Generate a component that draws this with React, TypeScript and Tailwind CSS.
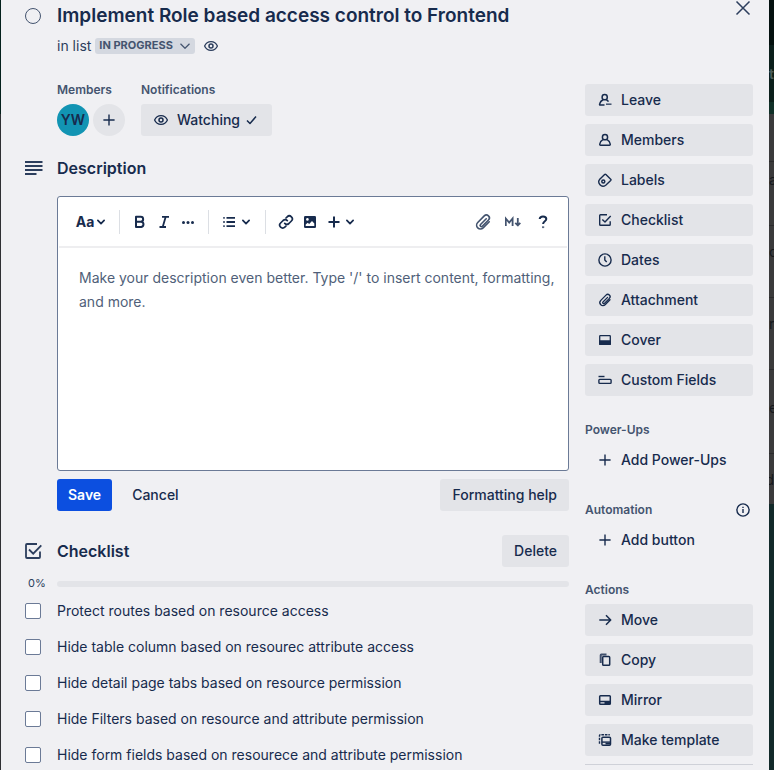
import type { ReactNode } from "react";

function Svg({ size = 16, className = "", children }: { size?: number; className?: string; children: ReactNode }) {
  return (
    <svg
      width={size}
      height={size}
      viewBox="0 0 16 16"
      fill="none"
      stroke="currentColor"
      strokeWidth="1.3"
      strokeLinecap="butt"
      strokeLinejoin="round"
      aria-hidden="true"
      className={"shrink-0 " + className}
    >
      {children}
    </svg>
  );
}

const EyeIcon = () => (
  <Svg>
    <path d="M1.6 8C2.8 5.2 5.2 3.6 8 3.6S13.2 5.2 14.4 8C13.2 10.8 10.8 12.4 8 12.4S2.8 10.8 1.6 8Z" />
    <circle cx="8" cy="8" r="2" strokeWidth="1.5" />
  </Svg>
);
const PlusIcon = () => (
  <Svg>
    <path d="M8 2.4v11.2M2.4 8h11.2" strokeWidth="1.4" />
  </Svg>
);
const ChevronIcon = () => (
  <Svg size={10}>
    <path d="M3 5.5l5 5 5-5" strokeWidth="2.8" strokeLinecap="round" />
  </Svg>
);
const ClipIcon = ({ size = 16 }: { size?: number }) => (
  <Svg size={size}>
    <path
      d="M10.6 5.4 6 10a.9.9 0 0 0 1.4 1.4l5-5A2.3 2.3 0 0 0 9 3.1L3.8 8.4a3 3 0 0 0 4.3 4.3L13 7.8"
      strokeWidth="1.3"
      strokeLinecap="round"
    />
  </Svg>
);
const LeaveIcon = () => (
  <Svg>
    <circle cx="7.7" cy="5.2" r="2.6" strokeWidth="1.5" />
    <path d="M7.5 13H3.2c-.6 0-.8-.6-.5-1.2.5-1.9 1.6-3.3 3.3-4.1M9.4 7.7c.9.4 1.6 1.1 2.1 1.9" strokeWidth="1.5" />
    <path d="M9 12.2h5.5" strokeWidth="1.5" opacity=".8" />
  </Svg>
);
const MemberIcon = () => (
  <Svg>
    <circle cx="8" cy="5.2" r="2.6" strokeWidth="1.5" />
    <path
      d="M5.9 7.7C4.2 8.6 2.9 10.2 2.7 12.2c0 .6.3 1 .8 1h9c.5 0 .8-.4.8-1-.2-2-1.5-3.6-3.2-4.5"
      strokeWidth="1.5"
    />
  </Svg>
);
const LabelIcon = () => (
  <Svg>
    <path
      d="M2.5 7.6 7.6 2.5c.4-.4.9-.4 1.3 0l4.8 4.7c.4.4.4.9 0 1.3l-5 4.7c-1.8 1.4-4.3 1.2-5.7-.4s-1.6-3.7-.5-5.2Z"
      strokeWidth="1.4"
    />
    <circle cx="6.3" cy="9.5" r="1.5" strokeWidth="1.5" />
  </Svg>
);
const CheckSquareIcon = () => (
  <Svg>
    <path d="M10 2.8H3.5a.8.8 0 0 0-.8.8v8.9c0 .4.4.8.8.8h8.9c.5 0 .8-.4.8-.8V9.2" strokeWidth="1.4" />
    <path d="m5.3 7.4 2.7 2.7 5.7-6" strokeWidth="1.4" />
  </Svg>
);
const ClockIcon = () => (
  <Svg>
    <circle cx="8" cy="8" r="6.1" strokeWidth="1.4" />
    <path d="M7.8 4.3V8l1.9 2" strokeWidth="1.4" />
  </Svg>
);
const CoverIcon = () => (
  <Svg>
    <rect x="2.7" y="3.7" width="10.6" height="8.6" rx=".6" />
    <path d="M2.7 9h10.6v3.3H2.7Z" fill="currentColor" />
  </Svg>
);
const FieldsIcon = () => (
  <Svg>
    <path d="M1.5 4.5h6" strokeWidth="1.4" />
    <rect x="1.9" y="7.4" width="12.2" height="4" rx=".8" strokeWidth="1.4" />
  </Svg>
);
const ArrowIcon = () => (
  <Svg>
    <path d="M2.3 8h11.2M9 3.2 13.7 8 9 12.8" strokeWidth="1.5" />
  </Svg>
);
const CopyIcon = () => (
  <Svg>
    <path d="M3.7 11V3.3c0-.4.2-.7.6-.7h5.2" strokeWidth="2" opacity=".8" />
    <rect x="5.7" y="4.5" width="7" height="8.8" rx=".9" strokeWidth="1.5" />
  </Svg>
);
const MirrorIcon = () => (
  <Svg>
    <rect x="2.7" y="3.7" width="10.6" height="8.6" rx=".8" strokeWidth="1.5" />
    <path d="M2.7 9.5h10.6" strokeWidth="1.5" />
    <path d="M7.5 11h5.5" strokeWidth="2" />
  </Svg>
);
const TemplateIcon = () => (
  <Svg>
    <rect x="4.9" y="5.3" width="8.6" height="8" rx="1" strokeWidth="1.5" />
    <path d="M5 10.1h8.5" strokeWidth="1.4" />
    <path d="M8.5 11.6h4.5" strokeWidth="1.8" />
    <path d="M2.5 11.8V3.5c0-.5.3-.8.8-.8h9.5" strokeWidth="1.4" strokeDasharray="2.6 .9" />
  </Svg>
);

const dialogButton = "h-8 rounded-[3px] bg-[#e3e4e8] font-medium text-[#172b4d]";

function SideButton({ icon, label, plain = false }: { icon: ReactNode; label: string; plain?: boolean }) {
  return (
    <button
      type="button"
      className={
        "flex h-8 w-full items-center gap-2 rounded-[3px] px-3 text-left font-medium text-[#172b4d] " +
        (plain ? "" : "bg-[#e3e4e8]")
      }
    >
      {icon}
      {label}
    </button>
  );
}

const smallHeading = "text-xs leading-5 font-semibold text-[#44546f]";
const tool = "flex h-6 w-6 items-center justify-center";

function Divider() {
  return <span className="mx-2 h-6 w-px bg-[#dcdfe4]" />;
}

function Toolbar() {
  return (
    <div className="mx-px flex h-[51px] items-center border-b-2 border-[#eeeef0] px-3 text-[#172b4d]">
      <button type="button" aria-label="Text styles" className="flex h-6 w-10 items-center justify-center gap-0.5 font-bold">
        Aa
        <ChevronIcon />
      </button>
      <Divider />
      <button type="button" aria-label="Bold" className={tool}>
        <Svg>
          <path d="M4 2.8h4.7a2.4 2.4 0 0 1 0 4.9H4ZM4 7.7h5.3a2.7 2.7 0 0 1 0 5.3H4Z" strokeWidth="2" />
        </Svg>
      </button>
      <button type="button" aria-label="Italic" className={tool}>
        <Svg>
          <path d="M6 2.8h7M3.5 13h6.5M9.7 2.8 6.7 13" strokeWidth="1.8" />
        </Svg>
      </button>
      <button type="button" aria-label="More formatting" className={tool}>
        <Svg>
          <g fill="currentColor" stroke="none">
            <circle cx="3.5" cy="8.5" r="1.5" />
            <circle cx="8" cy="8.5" r="1.5" />
            <circle cx="12.5" cy="8.5" r="1.5" />
          </g>
        </Svg>
      </button>
      <Divider />
      <button type="button" aria-label="Lists" className="flex h-6 w-10 items-center gap-1 pl-1">
        <Svg>
          <path d="M5.5 3.8H14M5.5 8H14M5.5 12.2H14" strokeWidth="1.8" />
          <path d="M2 3.8h2M2 8h2M2 12.2h2" strokeWidth="1.8" opacity=".7" />
        </Svg>
        <ChevronIcon />
      </button>
      <Divider />
      <button type="button" aria-label="Link" className={tool}>
        <Svg>
          <g strokeWidth="1.7" strokeLinecap="round">
            <path d="M6.7 9.3a3 3 0 0 0 4.2.2l2.5-2.5a2.9 2.9 0 0 0-4.2-4.2L8 4" />
            <path d="M9.3 6.7a3 3 0 0 0-4.2-.2L2.6 9a2.9 2.9 0 0 0 4.2 4.2L8 12" />
          </g>
        </Svg>
      </button>
      <button type="button" aria-label="Image" className={tool}>
        <Svg>
          <rect x="2" y="2" width="12" height="12" rx="1.3" fill="currentColor" stroke="none" />
          <circle cx="5.4" cy="5.4" r="1.3" fill="white" stroke="none" />
          <path d="M3.7 12V10.5l2-1.8 1.5 1.3 2.8-3 2.3 2.5V12Z" fill="white" stroke="none" />
        </Svg>
      </button>
      <button type="button" aria-label="Insert" className="flex h-6 w-9 items-center justify-center gap-1">
        <Svg>
          <path d="M9 2.5v11M3.5 8h11" strokeWidth="2" />
        </Svg>
        <ChevronIcon />
      </button>
      <div className="ml-auto flex gap-1.5 text-[#44546f]">
        <button type="button" aria-label="Attach file" className={tool}>
          <ClipIcon size={20} />
        </button>
        <button type="button" aria-label="Markdown" className={tool}>
          <Svg>
            <path d="M.8 12V4.5l3.4 4 3.4-4V12" strokeWidth="1.8" strokeLinejoin="miter" />
            <path d="M12.8 4v7M10.3 8.8l2.5 2.7 2.5-2.7" strokeWidth="1.8" />
          </Svg>
        </button>
        <button type="button" aria-label="Editor help" className={tool + " text-[#172b4d]"}>
          <Svg>
            <path d="M4.7 5c.1-1.5 1.4-2.6 3.3-2.6 2 0 3.3 1.1 3.3 2.7 0 2.3-3.2 2.1-3.2 4.9" strokeWidth="2" />
            <path d="M7 13.2h2.2" strokeWidth="1.8" opacity=".7" />
          </Svg>
        </button>
      </div>
    </div>
  );
}

const tasks = [
  "Protect routes based on resource access",
  "Hide table column based on resourec attribute access",
  "Hide detail page tabs based on resource permission",
  "Hide Filters based on resource and attribute permission",
  "Hide form fields based on resourece and attribute permission",
];

function Gutter({ children }: { children?: ReactNode }) {
  return <div className="flex w-14 shrink-0 items-center pl-6">{children}</div>;
}

function CardBody() {
  return (
    <div className="min-w-0 flex-1">
      <div className="mt-6 flex gap-4 pl-14">
        <section>
          <h3 className={smallHeading}>Members</h3>
          <div className="mt-1 flex gap-1">
            <button type="button" className="h-8 w-8 rounded-full bg-[#1294b3] font-semibold text-[#172b4d]">
              YW
            </button>
            <button
              type="button"
              aria-label="Add member"
              className="flex h-8 w-8 items-center justify-center rounded-full bg-[#e3e4e8] text-[#172b4d]"
            >
              <PlusIcon />
            </button>
          </div>
        </section>
        <section>
          <h3 className={smallHeading}>Notifications</h3>
          <button type="button" className={dialogButton + " mt-1 flex items-center gap-2 px-3"}>
            <EyeIcon />
            Watching
            <Svg className="-ml-1">
              <path d="m3 8.5 3 3 6-7" strokeWidth="1.5" />
            </Svg>
          </button>
        </section>
      </div>

      <div className="mt-4 flex h-8 items-center">
        <Gutter>
          <svg width="18" height="16" viewBox="0 0 18 16" stroke="currentColor" strokeWidth="1.8" aria-hidden="true">
            <path d="M0 2h17.5M0 6h17.5M0 10h17.5M0 14h11.5" />
          </svg>
        </Gutter>
        <h2 className="text-base font-semibold text-[#172b4d]">Description</h2>
      </div>

      <div className="mt-3 pl-14">
        <div className="rounded-[3px] border border-[#6b7a96] bg-white">
          <Toolbar />
          <textarea
            aria-label="Description"
            placeholder="Make your description even better. Type '/' to insert content, formatting, and more."
            className="block h-[222px] w-full resize-none bg-transparent pt-[18px] pr-1 pl-[21px] leading-6 outline-none placeholder:text-[#505f79] placeholder:opacity-100"
          />
        </div>
        <div className="mt-2 flex">
          <button type="button" className="h-8 rounded-[3px] bg-[#0c4fe0] px-[11px] font-semibold text-white">
            Save
          </button>
          <button type="button" className="ml-2 h-8 px-3 font-medium text-[#172b4d]">
            Cancel
          </button>
          <button type="button" className={dialogButton + " ml-auto px-3"}>
            Formatting help
          </button>
        </div>
      </div>

      <div className="mt-6 flex h-8 items-center">
        <Gutter>
          <svg width="18" height="16" viewBox="0 0 18 16" fill="none" stroke="currentColor" strokeWidth="1.8" aria-hidden="true">
            <path d="M12 1H2a1 1 0 0 0-1 1v12a1 1 0 0 0 1 1h12a1 1 0 0 0 1-1V8.5" />
            <path d="m4 6.5 4.2 4.2L16.3 2.3" />
          </svg>
        </Gutter>
        <h2 className="flex-1 text-base font-semibold text-[#172b4d]">Checklist</h2>
        <button type="button" className={dialogButton + " px-3"}>
          Delete
        </button>
      </div>
      <div className="mt-2 flex h-[18px] items-center">
        <span className="w-14 pl-[27px] text-[11px]">0%</span>
        <div className="h-1.5 flex-1 rounded-full bg-[#e3e4e8]" role="progressbar" aria-label="Checklist progress" aria-valuenow={0} />
      </div>
      <ul>
        {tasks.map((task, i) => (
          <li key={task} className="flex h-9 items-center text-[#172b4d]">
            <Gutter>
              <input
                id={`task-${i}`}
                type="checkbox"
                className="h-4 w-4 appearance-none rounded-[2px] border border-[#6b7a96] bg-white checked:bg-[#0c4fe0]"
              />
            </Gutter>
            <label htmlFor={`task-${i}`} className="whitespace-nowrap">
              {task}
            </label>
          </li>
        ))}
      </ul>
    </div>
  );
}

function Sidebar() {
  return (
    <aside className="w-[168px] shrink-0 pt-7">
      <div className="flex flex-col gap-2">
        <SideButton icon={<LeaveIcon />} label="Leave" />
        <SideButton icon={<MemberIcon />} label="Members" />
        <SideButton icon={<LabelIcon />} label="Labels" />
        <SideButton icon={<CheckSquareIcon />} label="Checklist" />
        <SideButton icon={<ClockIcon />} label="Dates" />
        <SideButton icon={<ClipIcon />} label="Attachment" />
        <SideButton icon={<CoverIcon />} label="Cover" />
        <SideButton icon={<FieldsIcon />} label="Custom Fields" />
      </div>
      <h3 className={smallHeading + " mt-6 mb-1"}>Power-Ups</h3>
      <SideButton plain icon={<PlusIcon />} label="Add Power-Ups" />
      <div className="mt-6 mb-1 flex items-center justify-between pr-0.5">
        <h3 className={smallHeading}>Automation</h3>
        <button type="button" aria-label="About automation" className="text-[#172b4d]">
          <Svg>
            <circle cx="8" cy="8" r="6.1" strokeWidth="1.4" />
            <path d="M8 7v4M8 4.7v1.3" strokeWidth="1.4" />
          </Svg>
        </button>
      </div>
      <SideButton plain icon={<PlusIcon />} label="Add button" />
      <h3 className={smallHeading + " mt-6 mb-1"}>Actions</h3>
      <div className="flex flex-col gap-2">
        <SideButton icon={<ArrowIcon />} label="Move" />
        <SideButton icon={<CopyIcon />} label="Copy" />
        <SideButton icon={<MirrorIcon />} label="Mirror" />
        <SideButton icon={<TemplateIcon />} label="Make template" />
        <hr className="border-[#cfd1d8]" />
      </div>
    </aside>
  );
}

function BoardEdge() {
  return (
    <div aria-hidden="true" className="flex w-[5px] shrink-0 flex-col overflow-hidden bg-[#122a2a] leading-5 text-[#16191d]">
      <div className="h-[45px] shrink-0 bg-[#04110f]" />
      <div className="flex h-[57px] shrink-0 items-center bg-[#0b1f1b] font-semibold text-[#4d5c59]">t</div>
      <div className="h-3 shrink-0 bg-[#103028]" />
      <div className="flex h-[390px] shrink-0 flex-col bg-[#3a3a3b]">
        <div className="h-12 border-b border-[#2b2b2d]" />
        <div className="h-16 border-b border-[#2b2b2d] pt-2">a</div>
        <div className="h-[72px] border-b border-[#2b2b2d] pt-4">o</div>
        <div className="h-[72px] border-b border-[#2b2b2d] pt-4">r</div>
        <div className="h-[84px] border-b border-[#2b2b2d] pt-7">e</div>
        <div className="flex flex-1 justify-end pt-4">d</div>
      </div>
    </div>
  );
}

export default function App() {
  return (
    <div className="flex h-screen overflow-hidden bg-[#2a2c30] font-['Inter','Liberation_Sans',sans-serif] text-sm text-[#2c3e5d]">
      <div aria-hidden="true" className="flex w-px shrink-0 flex-col">
        <div className="h-[114px] bg-[#04201b]" />
        <div className="flex-1 bg-[#2f3033]" />
      </div>
      <main role="dialog" aria-labelledby="card-title" className="min-w-0 flex-1 bg-[#f0f0f3]">
        <header className="flex items-start pr-[18px]">
          <div className="flex w-14 shrink-0 pt-2 pl-6">
            <input type="checkbox" aria-label="Mark complete" className="h-4 w-4 appearance-none rounded-full border border-[#44546f]" />
          </div>
          <div className="min-w-0 flex-1">
            <h1 id="card-title" className="pt-1 text-[19px] leading-6 font-semibold text-[#172b4d]">
              Implement Role based access control to Frontend
            </h1>
            <div className="mt-2 flex h-5 items-center">
              in list
              <button
                type="button"
                className="ml-1 flex h-4 items-center gap-1.5 rounded-[3px] bg-[#d4d8e0] px-1 text-[11px] font-bold text-[#44546f]"
              >
                IN PROGRESS
                <Svg size={12}>
                  <path d="m2 5 6 6 6-6" strokeWidth="1.6" />
                </Svg>
              </button>
              <button type="button" aria-label="Watching this card" className="ml-2">
                <EyeIcon />
              </button>
            </div>
          </div>
          <button type="button" aria-label="Close dialog" className="h-4 w-4">
            <Svg>
              <path d="M1.5 1.5l13 13M14.5 1.5l-13 13" strokeWidth="1.5" />
            </Svg>
          </button>
        </header>
        <div className="flex gap-4 pr-4">
          <CardBody />
          <Sidebar />
        </div>
      </main>
      <BoardEdge />
    </div>
  );
}
